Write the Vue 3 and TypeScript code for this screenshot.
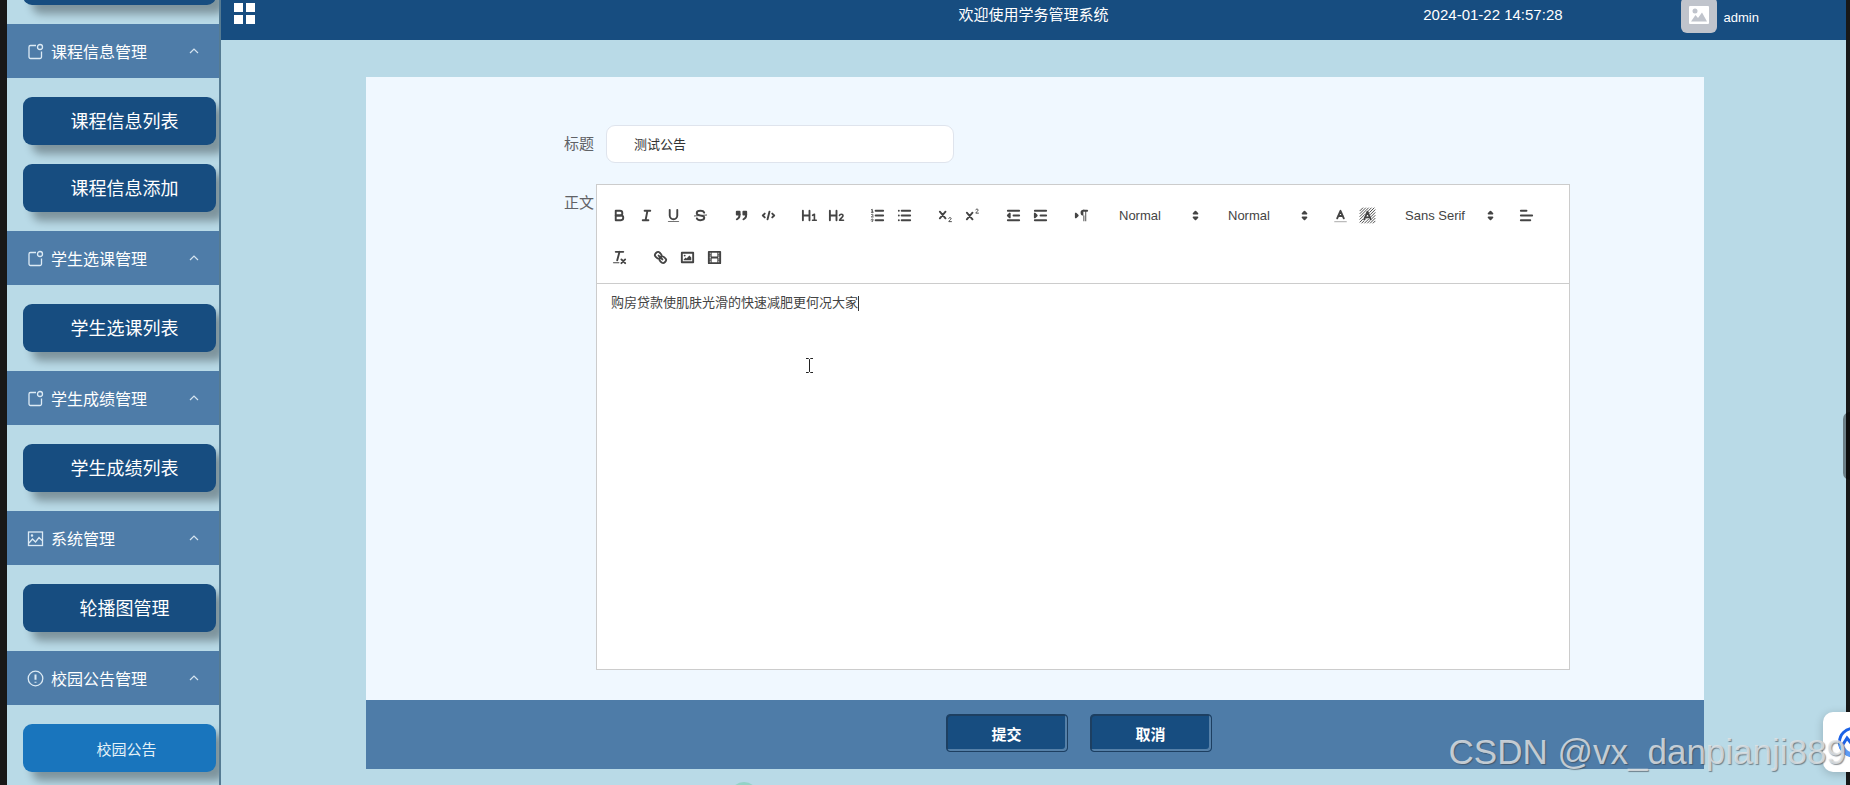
<script setup lang="ts">
import { ref } from 'vue'

interface MenuItem {
  label: string
  active?: boolean
}
interface MenuGroup {
  title: string
  icon: 'box' | 'picture' | 'notice'
  items: MenuItem[]
}
interface Tool {
  kind: 'button' | 'select'
  name: string
  icon?: string
  wide?: boolean
  options?: string[]
}

const menu: MenuGroup[] = [
  { title: '课程信息管理', icon: 'box', items: [{ label: '课程信息列表' }, { label: '课程信息添加' }] },
  { title: '学生选课管理', icon: 'box', items: [{ label: '学生选课列表' }] },
  { title: '学生成绩管理', icon: 'box', items: [{ label: '学生成绩列表' }] },
  { title: '系统管理', icon: 'picture', items: [{ label: '轮播图管理' }] },
  { title: '校园公告管理', icon: 'notice', items: [{ label: '校园公告', active: true }] },
]

const title = ref('测试公告')
const body = '购房贷款使肌肤光滑的快速减肥更何况大家'

const btn = (name: string, icon: string): Tool => ({ kind: 'button', name, icon })

const toolbar: Tool[][] = [
  [
    btn('bold', '<path d="M5,4H9.5A2.5,2.5,0,0,1,9.5,9H5Z"/><path d="M5,9H10.5A2.5,2.5,0,0,1,10.5,14H5Z"/>'),
    btn('italic', '<path d="M7,4H13M5,14H11M8,14L10,4"/>'),
    btn('underline', '<path d="M5,3V9a4,4,0,0,0,8,0V3"/><rect class="solid" x="3" y="15" width="12" height="1" rx=".5"/>'),
    btn('strike', '<path class="thin" d="M15.5,8.5L2.5,9.5"/><path d="M12.9,6C12.4,4.7,10.8,4,9,4C6.8,4,5,5,5,6.5C5,8.2,6.8,8.6,9,9C11.2,9.3,13,9.8,13,11.5C13,13,11.2,14,9,14C7.2,14,5.6,13.3,5.1,12"/>'),
  ],
  [
    btn('blockquote', '<rect class="filled" x="4" y="5" width="3" height="3"/><rect class="filled" x="11" y="5" width="3" height="3"/><path d="M7,8c0,4-3,5-3,5M14,8c0,4-3,5-3,5"/>'),
    btn('code', '<path d="M5,7L3,9L5,11M13,7L15,9L13,11M10,5L8,13"/>'),
  ],
  [
    btn('heading 1', '<path d="M2,4V14M9,4V14M2,9H9"/><path class="mid" d="M12.3,8.8L14.2,7.7V14M12.2,14H16.2"/>'),
    btn('heading 2', '<path d="M2,4V14M9,4V14M2,9H9"/><path class="mid" d="M12.2,8.9C12.6,7.2,15.9,7.2,15.9,9.2C15.9,10.8,12.8,12,12.3,14H16.4"/>'),
  ],
  [
    btn('ordered list', '<path d="M7,4H15M7,9H15M7,14H15"/><path class="thin" d="M2.5,3L3.5,2.5V5.5M2.5,5.5H4.5M4.5,10.5h-2c0-.2,1.8-1,1.8-2.2A1,1,0,0,0,2.5,8.1M2.5,14.8a1,1,0,0,0,1.8-.1A.7,.7,0,0,0,3.7,14a.7,.7,0,0,0,.6-.7,1,1,0,0,0-1.8-.1"/>'),
    btn('bullet list', '<path d="M6,4H15M6,9H15M6,14H15M3,4V4M3,9V9M3,14V14"/>'),
  ],
  [
    btn('subscript', '<path d="M3,5L9,12M9,5L3,12"/><path class="thin" d="M12.4,12C12.7,10.8,15,10.9,15,12.3C15,13.4,12.8,14,12.5,15.5H15.3"/>'),
    btn('superscript', '<path d="M3,6L9,13M9,6L3,13"/><path class="thin" d="M12.4,3C12.7,1.8,15,1.9,15,3.3C15,4.4,12.8,5,12.5,6.5H15.3"/>'),
  ],
  [
    btn('outdent', '<path d="M3,14H15M3,4H15M9,9H15"/><path class="filled" d="M5,7V11L3,9Z"/>'),
    btn('indent', '<path d="M3,14H15M3,4H15M9,9H15"/><path class="filled" d="M3,7V11L5,9Z"/>'),
  ],
  [btn('direction', '<path class="filled" d="M3,11L5,9L3,7Z"/><path d="M15,4H11"/><path class="solid" d="M11,3a3,3,0,0,0,0,6h1V3ZM11,4h1V15h-1ZM13,4h1V15h-1Z"/>')],
  [{ kind: 'select', name: 'size', options: ['Normal', 'Small', 'Large', 'Huge'] }],
  [{ kind: 'select', name: 'header', options: ['Normal', 'Heading 1', 'Heading 2'] }],
  [
    btn('text color', '<path class="faint" d="M3,15.5H15"/><path d="M5.5,12L9,4L12.5,12M6.5,9.5H11.5"/>'),
    btn('background color', '<path class="thin" d="M1,4L4,1M1,7L7,1M1,10L10,1M1,13L13,1M1,16L16,1M3,17L17,3M6,17L17,6M9,17L17,9M12,17L17,12M15,17L17,15"/><path class="halo" d="M5.5,13L9,5L12.5,13M6.5,11H11.5"/><path d="M5.5,13L9,5L12.5,13M6.5,11H11.5"/>'),
  ],
  [{ kind: 'select', name: 'font', wide: true, options: ['Sans Serif', 'Serif', 'Monospace'] }],
  [btn('align', '<path d="M3,9H15M3,14H13M3,4H9"/>')],
  [btn('clear format', '<path d="M5,3H13M6.6,12L9,3"/><path d="M11,11L15,15M15,11L11,15"/><rect class="solid" x="2" y="14" width="7" height="1" rx=".5"/>')],
  [
    btn('link', '<path d="M7,7L11,11M8.9,4.6a3.5,3.5,0,0,1,.4,4.7A3.5,3.5,0,0,1,4.6,8.9C3.2,7.5,2,6.4,4.2,4.2S7.5,3.2,8.9,4.6ZM13.4,9.1a3.5,3.5,0,0,0-4.7-.4,3.5,3.5,0,0,0,.4,4.7c1.4,1.4,2.5,2.5,4.7,.4S14.8,10.5,13.4,9.1Z"/>'),
    btn('image', '<rect x="3" y="4" width="12" height="10"/><circle class="solid" cx="6" cy="7" r="1"/><path class="solid" d="M5,12V11L7,9L8,10L11,7L13,9V12Z"/>'),
    btn('video', '<rect x="3" y="3" width="12" height="12"/><path class="solid" d="M5,3h1V15h-1ZM12,3h1V15h-1ZM5,8h8v2h-8ZM3,5h3v1h-3ZM3,7h3v1h-3ZM3,10h3v1h-3ZM3,12h3v1h-3ZM12,5h3v1h-3ZM12,7h3v1h-3ZM12,10h3v1h-3ZM12,12h3v1h-3Z"/>'),
  ],
]
</script>

<template>
  <div class="app">
    <aside class="sidebar">
      <nav class="menu">
        <a href="#" class="item" aria-label="上一项"></a>
        <section v-for="g in menu" :key="g.title" class="group">
          <button type="button" class="group-title">
            <svg class="group-icon" viewBox="0 0 17 17" aria-hidden="true">
              <template v-if="g.icon === 'box'">
                <path d="M9,2.5H3.5A1.5,1.5,0,0,0,2,4V14a1.5,1.5,0,0,0,1.500,1.500H13A1.500,1.500,0,0,0,14.500,14V8.500" />
                <circle cx="13" cy="4" r="2.500" />
              </template>
              <template v-else-if="g.icon === 'picture'">
                <rect x="1.500" y="2" width="14" height="13.500" />
                <path d="M2,13L5.500,9L8.500,12L12,7.500L15,10.500" />
                <circle cx="5" cy="5.500" r=".6" />
              </template>
              <template v-else>
                <circle cx="8.500" cy="8.500" r="7.300" />
                <path class="mark" d="M8.500,4.500V9.800M8.500,11.700V12.700" />
              </template>
            </svg>
            <span class="group-text">{{ g.title }}</span>
            <svg class="chevron" viewBox="0 0 10 6" aria-hidden="true"><path d="M1,5L5,1L9,5" /></svg>
          </button>
          <a v-for="it in g.items" :key="it.label" href="#" class="item" :class="{ active: it.active }">{{ it.label }}</a>
        </section>
      </nav>
    </aside>

    <div class="page">
      <header class="topbar">
        <button type="button" class="grid-button" aria-label="菜单">
          <svg viewBox="0 0 21 21"><path d="M0,0h9v9H0ZM12,0h9v9h-9ZM0,12h9v9H0ZM12,12h9v9h-9Z" /></svg>
        </button>
        <h1 class="system">欢迎使用学务管理系统</h1>
        <div class="status">
          <time class="clock">2024-01-22 14:57:28</time>
          <div class="user">
            <svg class="avatar" viewBox="0 0 36 36" aria-hidden="true">
              <rect width="36" height="36" rx="6" fill="#c0c4cc" />
              <rect x="8" y="9" width="20" height="18" rx="1" fill="#fff" />
              <circle cx="14" cy="14" r="2.500" fill="#c0c4cc" />
              <path d="M10,24.500L14.500,18L17,21L21,15.500L26,24.500Z" fill="#c0c4cc" />
            </svg>
            <span>admin</span>
          </div>
        </div>
      </header>

      <main class="content">
        <form class="panel" @submit.prevent>
          <div class="fields">
            <div class="row title-row">
              <label for="notice-title">标题</label>
              <input id="notice-title" v-model="title" type="text" />
            </div>
            <div class="row body-row">
              <span id="notice-body" class="label">正文</span>
              <div class="editor">
                <div class="toolbar">
                  <span v-for="(group, i) in toolbar" :key="i" class="tools">
                    <template v-for="t in group" :key="t.name">
                      <button v-if="t.kind === 'button'" type="button" class="tool" :aria-label="t.name">
                        <svg viewBox="0 0 18 18" v-html="t.icon"></svg>
                      </button>
                      <span v-else class="picker" :class="{ wide: t.wide }">
                        <select :aria-label="t.name">
                          <option v-for="o in t.options" :key="o">{{ o }}</option>
                        </select>
                        <svg viewBox="0 0 18 18" aria-hidden="true">
                          <path class="filled" d="M7,11L9,13L11,11ZM7,7L9,5L11,7Z" />
                        </svg>
                      </span>
                    </template>
                  </span>
                </div>
                <div class="document" contenteditable="true" role="textbox" aria-multiline="true" aria-labelledby="notice-body"><p>{{ body }}<span class="caret"></span></p></div>
                <svg class="pointer" viewBox="0 0 9 17" aria-hidden="true">
                  <path d="M1,1.500H3.500L4.500,2.500L5.500,1.500H8M4.500,2.500V14.500M1,15.500H3.500L4.500,14.500L5.500,15.500H8" />
                </svg>
              </div>
            </div>
          </div>
          <div class="actions">
            <button type="submit">提交</button>
            <button type="button">取消</button>
          </div>
        </form>
      </main>
      <span class="bubble"></span>
    </div>

    <span class="scroll-thumb"></span>
    <div class="widget">
      <svg viewBox="0 0 32 32" aria-hidden="true">
        <circle cx="16" cy="16" r="13.500" fill="none" stroke="#1b62e6" stroke-width="3" />
        <path d="M5,20L10,12L14,17L20,9" fill="none" stroke="#1b62e6" stroke-width="3" />
        <path d="M4,18A13,13,0,0,0,16,29" fill="none" stroke="#5c9bf5" stroke-width="5" />
      </svg>
    </div>
    <span class="watermark">CSDN @vx_danpianji889</span>
  </div>
</template>

<style>
body {
  margin: 0;
  background: #181818;
}
</style>

<style scoped>
.app {
  position: relative;
  display: flex;
  box-sizing: border-box;
  height: 100vh;
  padding: 0 4px 0 7px;
  overflow: hidden;
  background: #181818;
  color: #fff;
  font-family: "Liberation Sans", "Noto Sans CJK SC", sans-serif;
}
button,
input,
select {
  font-family: inherit;
}
.sidebar {
  flex: none;
  box-sizing: border-box;
  width: 214px;
  overflow: hidden;
  background: #b9dae7;
  border-right: 2px solid #557b93;
}
.menu {
  margin-top: -43px;
}
.item {
  display: flex;
  align-items: center;
  justify-content: center;
  box-sizing: border-box;
  height: 48px;
  margin: 19px 3px 19px 16px;
  padding: 0 0 3px 10px;
  border-radius: 9px;
  background: #174d80;
  box-shadow: 9px 9px 9px rgba(0, 0, 0, 0.32);
  color: #fff;
  font-size: 18px;
  text-decoration: none;
}
.menu > .item {
  margin-top: 0;
}
.item.active {
  padding-left: 14px;
  padding-bottom: 0;
  background: #1975bd;
  color: #e4f1f7;
  font-size: 15px;
}
.group {
  display: flex;
  flex-direction: column;
  gap: 19px;
  margin-bottom: 19px;
}
.group .item {
  margin-top: 0;
  margin-bottom: 0;
}
.group-title {
  position: relative;
  display: flex;
  align-items: center;
  gap: 7px;
  height: 54px;
  padding: 0 20px;
  border: 0;
  background: #4e7ca8;
  color: #fff;
  font-size: 16px;
  text-align: left;
}
.group-icon {
  width: 17px;
  height: 17px;
  fill: none;
  stroke: #dceaf4;
  stroke-width: 1.3;
}
.mark {
  stroke-width: 2;
}
.group-text {
  flex: 1;
  padding-bottom: 1px;
}
.chevron {
  width: 10px;
  height: 6px;
  fill: none;
  stroke: #d5e4f0;
  stroke-width: 1.2;
}
.page {
  position: relative;
  display: flex;
  flex: 1;
  flex-direction: column;
  min-width: 0;
  overflow: hidden;
  background: #b9dae7;
}
.topbar {
  display: grid;
  grid-template-rows: 30px;
  grid-template-columns: 1fr auto 1fr;
  align-items: center;
  padding: 0 13px 10px;
  background: #174d80;
}
.grid-button {
  justify-self: start;
  padding: 0 0 3px;
  border: 0;
  background: none;
  line-height: 0;
}
.grid-button svg {
  width: 21px;
  height: 21px;
  fill: #fff;
}
.system {
  margin: 0;
  font-size: 15px;
  font-weight: 400;
  line-height: 20px;
}
.status {
  display: flex;
  align-items: center;
  justify-self: end;
  gap: 118px;
  height: 30px;
  padding-right: 74px;
}
.clock {
  font-size: 15px;
  line-height: 20px;
}
.user {
  display: flex;
  align-items: center;
  gap: 7px;
  font-size: 13px;
}
.user span {
  padding-top: 4px;
}
.avatar {
  width: 36px;
  height: 36px;
}
.content {
  padding: 37px 142px 0 145px;
}
.panel {
  background: #f0f8ff;
}
.fields {
  display: flex;
  flex-direction: column;
  gap: 21px;
  padding: 48px 134px 30px 110px;
}
.row {
  display: grid;
  grid-template-columns: 118px 1fr;
  column-gap: 2px;
}
.title-row {
  grid-template-columns: 118px 348px;
  column-gap: 12px;
}
.row label,
.label {
  color: #606266;
  font-size: 15px;
  line-height: 38px;
  text-align: right;
}
.row input {
  box-sizing: border-box;
  height: 38px;
  padding: 0 27px 2px;
  border: 1px solid #dfe4ed;
  border-radius: 9px;
  background: #fff;
  color: #333;
  font-size: 13px;
}
.editor {
  position: relative;
  min-width: 0;
  border: 1px solid #ccc;
  background: #fff;
}
.toolbar {
  display: flex;
  flex-wrap: wrap;
  column-gap: 14px;
  padding: 9px 8px 5px 9px;
  border-bottom: 1px solid #ccc;
}
.tools {
  display: flex;
  align-items: center;
  height: 42px;
}
.tool {
  width: 27px;
  height: 24px;
  padding: 0;
  border: 0;
  background: none;
  line-height: 0;
}
.toolbar svg {
  width: 17px;
  height: 17px;
  fill: none;
  stroke: #444;
  stroke-width: 2;
  stroke-linecap: round;
  stroke-linejoin: round;
}
.toolbar :deep(.thin) {
  stroke-width: 1;
}
.toolbar :deep(.mid) {
  stroke-width: 1.7;
}
.toolbar :deep(.filled) {
  fill: #444;
}
.toolbar :deep(.solid) {
  fill: #444;
  stroke: none;
}
.toolbar :deep(.faint) {
  stroke: #bbb;
  stroke-width: 1.5;
}
.toolbar :deep(.halo) {
  stroke: #fff;
  stroke-width: 3;
}
.picker {
  position: relative;
  width: 95px;
}
.picker.wide {
  width: 104px;
}
.picker select {
  width: 100%;
  height: 24px;
  padding: 0 0 0 10px;
  border: 0;
  appearance: none;
  background: none;
  color: #444;
  font-size: 13px;
}
.picker svg {
  position: absolute;
  top: 4px;
  right: 0;
  pointer-events: none;
}
.document {
  box-sizing: border-box;
  height: 385px;
  padding: 10px 14px;
  outline: 0;
  color: #444;
  font-size: 13px;
  line-height: 18px;
}
.document p {
  margin: 0;
}
.caret {
  display: inline-block;
  width: 1px;
  height: 15px;
  background: #333;
  vertical-align: middle;
}
.pointer {
  position: absolute;
  top: 172px;
  left: 208px;
  width: 9px;
  height: 17px;
  fill: none;
  stroke: #222;
}
.actions {
  display: flex;
  justify-content: center;
  gap: 22px;
  padding: 14px 0 17px 87px;
  background: #4e7ca8;
}
.actions button {
  box-sizing: border-box;
  width: 122px;
  height: 38px;
  padding: 0;
  border: 1px solid #1d3f61;
  border-radius: 4px;
  background: #174d80;
  box-shadow: inset 1px 1px 0 #1d3f61, inset -2px -2px 0 #5580a8;
  color: #fff;
  font-size: 15px;
  font-weight: 700;
}
.bubble {
  position: absolute;
  bottom: -25px;
  left: 509px;
  width: 28px;
  height: 28px;
  border-radius: 50%;
  background: #93d3c7;
}
.scroll-thumb {
  position: absolute;
  top: 412px;
  right: -7px;
  width: 14px;
  height: 68px;
  border-radius: 7px;
  background: rgba(0, 0, 0, 0.42);
}
.widget {
  position: absolute;
  right: -33px;
  bottom: 13px;
  box-sizing: border-box;
  width: 60px;
  height: 60px;
  padding: 14px;
  border-radius: 10px;
  background: #fff;
  box-shadow: 0 2px 10px rgba(0, 0, 0, 0.2);
}
.widget svg {
  width: 32px;
  height: 32px;
}
.watermark {
  position: absolute;
  right: 4px;
  bottom: 13px;
  color: rgba(225, 228, 230, 0.82);
  font-size: 35px;
  line-height: 40px;
  text-shadow: 1px 1px 1px rgba(60, 70, 80, 0.6);
  white-space: nowrap;
  pointer-events: none;
}
</style>
